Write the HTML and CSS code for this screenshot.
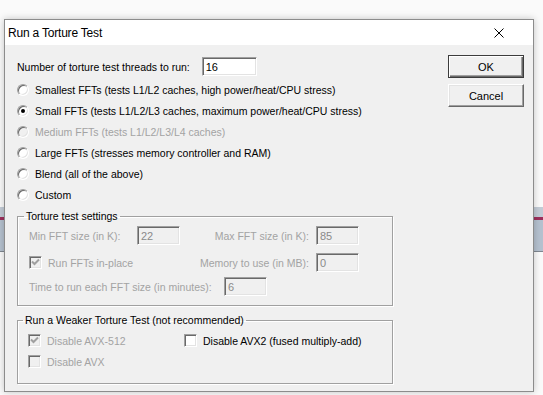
FILE: index.html
```html
<!DOCTYPE html>
<html>
<head>
    <meta charset="utf-8">
    <title>Run a Torture Test</title>
    <link rel="stylesheet" href="styles.css">
</head>
<body>
    <div class="window">
        <div class="titlebar">
            <span class="title">Run a Torture Test</span>
            <svg class="close" width="10" height="10" viewBox="0 0 10 10">
                <path d="M0.5 0.5 L9.5 9.5 M9.5 0.5 L0.5 9.5" stroke="#000" stroke-width="1" fill="none"/>
            </svg>
        </div>

        <div class="dialog">
            <div class="main">
                <div class="threads">
                    <span>Number of torture test threads to run:</span>
                    <div class="field">16</div>
                </div>

                <div class="options">
                    <div class="option"><span class="radio"></span>Smallest FFTs (tests L1/L2 caches, high power/heat/CPU stress)</div>
                    <div class="option"><span class="radio checked"></span>Small FFTs (tests L1/L2/L3 caches, maximum power/heat/CPU stress)</div>
                    <div class="option disabled"><span class="radio"></span>Medium FFTs (tests L1/L2/L3/L4 caches)</div>
                    <div class="option"><span class="radio"></span>Large FFTs (stresses memory controller and RAM)</div>
                    <div class="option"><span class="radio"></span>Blend (all of the above)</div>
                    <div class="option"><span class="radio"></span>Custom</div>
                </div>

                <fieldset class="group settings">
                    <legend>Torture test settings</legend>
                    <div class="row">
                        <span class="lbl first">Min FFT size (in K):</span>
                        <div class="field off">22</div>
                        <span class="lbl right">Max FFT size (in K):</span>
                        <div class="field off">85</div>
                    </div>
                    <div class="row second">
                        <span class="lbl first-wide"><span class="check off"><svg width="11" height="11" viewBox="0 0 11 11"><path d="M2 4.5 L4.5 7 L9 2.5" stroke="#a0a0a0" stroke-width="2" fill="none"/></svg></span>Run FFTs in-place</span>
                        <span class="lbl right">Memory to use (in MB):</span>
                        <div class="field off">0</div>
                    </div>
                    <div class="row third">
                        <span class="lbl long">Time to run each FFT size (in minutes):</span>
                        <div class="field off">6</div>
                    </div>
                </fieldset>

                <fieldset class="group weaker">
                    <legend>Run a Weaker Torture Test (not recommended)</legend>
                    <div class="checks">
                        <div class="option disabled"><span class="check off"><svg width="11" height="11" viewBox="0 0 11 11"><path d="M2 4.5 L4.5 7 L9 2.5" stroke="#a0a0a0" stroke-width="2" fill="none"/></svg></span>Disable AVX-512</div>
                        <div class="option"><span class="check"></span>Disable AVX2 (fused multiply-add)</div>
                        <div class="option disabled"><span class="check off"></span>Disable AVX</div>
                    </div>
                </fieldset>
            </div>

            <div class="buttons">
                <button class="default">OK</button>
                <button>Cancel</button>
            </div>
        </div>
    </div>
</body>
</html>
```

FILE: styles.css
```css
* {
    box-sizing: border-box;
    margin: 0;
    padding: 0;
}
body {
    font-family: "Liberation Sans", Arial, sans-serif;
    font-size: 10.5px;
    color: #000;
    background:
        linear-gradient(to bottom,
            transparent 207px,
            #c3ccd6 207px, #c3ccd6 217px,
            #9d2f5c 217px, #9d2f5c 220px,
            #b5c1cf 220px, #b5c1cf 251px,
            #7f8790 251px, #7f8790 252px,
            transparent 252px),
        #fafafa;
    min-height: 395px;
    padding: 19px 0 0 4px;
}
.window {
    width: 530px;
    height: 373px;
    border: 1px solid #8c8c8c;
    background: #f0f0f0;
    box-shadow: 0 0 7px rgba(0, 0, 0, 0.22);
    display: flex;
    flex-direction: column;
}
.titlebar {
    height: 25px;
    background: #fff;
    display: flex;
    align-items: center;
    justify-content: space-between;
    padding-left: 3px;
    flex-shrink: 0;
}
.title {
    font-size: 12px;
    letter-spacing: -0.2px;
}
.close {
    margin-right: 29px;
    margin-top: 1px;
}
.dialog {
    display: flex;
    padding: 0 9px 0 12px;
}
.main {
    width: 376px;
}
.threads {
    display: flex;
    align-items: center;
    height: 19px;
    margin-top: 12px;
}
.threads .field {
    margin-left: 12px;
    width: 55px;
    background: #fff;
    color: #000;
}
.field {
    width: 43px;
    height: 19px;
    border: 1px solid;
    border-color: #a0a0a0 #fff #fff #a0a0a0;
    box-shadow: inset 1px 1px 0 #696969, inset -1px -1px 0 #e3e3e3;
    padding: 3px 0 0 3px;
    line-height: 12px;
    font-size: 11px;
}
.field.off {
    background: #f0f0f0;
    color: #8a8a8a;
}
.options {
    margin-top: 3px;
}
.option {
    height: 21px;
    display: flex;
    align-items: center;
    white-space: nowrap;
}
.disabled {
    color: #a3a3a3;
}
.radio {
    width: 12px;
    height: 12px;
    border-radius: 50%;
    border: 1px solid;
    border-color: #a0a0a0 #fff #fff #a0a0a0;
    box-shadow: inset 1px 1px 0 #696969, inset -1px -1px 0 #e3e3e3;
    background: #fff;
    margin-right: 6px;
    display: flex;
    align-items: center;
    justify-content: center;
    flex-shrink: 0;
}
.disabled .radio {
    background: #f0f0f0;
}
.radio.checked::after {
    content: "";
    width: 4px;
    height: 4px;
    border-radius: 50%;
    background: #000;
}
.check {
    width: 13px;
    height: 13px;
    border: 1px solid;
    border-color: #a0a0a0 #fff #fff #a0a0a0;
    box-shadow: inset 1px 1px 0 #696969, inset -1px -1px 0 #e3e3e3;
    background: #fff;
    margin-right: 6px;
    display: inline-flex;
    align-items: center;
    justify-content: center;
    flex-shrink: 0;
}
.check.off {
    background: #f0f0f0;
}
.group {
    border: 1px solid #a0a0a0;
    box-shadow: 1px 1px 0 #fff, inset 1px 1px 0 #fff;
}
.group legend {
    line-height: 12px;
    padding: 0 2px;
    margin-left: -5px;
}
.settings {
    margin-top: 5px;
    padding: 4px 0 8px 11px;
    height: 96px;
}
.row {
    display: flex;
    align-items: center;
    height: 19px;
    color: #a3a3a3;
}
.row.second {
    margin-top: 8px;
}
.row.third {
    margin-top: 5px;
}
.lbl {
    white-space: nowrap;
    display: flex;
    align-items: center;
}
.lbl.first {
    width: 108px;
}
.lbl.first-wide {
    width: 151px;
}
.lbl.right {
    width: 136px;
    justify-content: flex-end;
    padding-right: 7px;
}
.lbl.long {
    width: 195px;
}
.weaker {
    margin-top: 8px;
    padding: 4px 0 5px 10px;
    height: 70px;
}
.checks {
    display: grid;
    grid-template-columns: 156px auto;
}
.buttons {
    margin-left: auto;
    display: flex;
    flex-direction: column;
    gap: 6px;
    margin-top: 10px;
}
button {
    width: 76px;
    height: 23px;
    font-family: inherit;
    font-size: 11px;
    background: #f0f0f0;
    color: #000;
    border: 1px solid;
    border-color: #fff #696969 #696969 #fff;
    box-shadow: inset -1px -1px 0 #a0a0a0, inset 1px 1px 0 #e3e3e3;
}
button.default {
    border: 1px solid #3c3c3c;
    box-shadow: inset 1px 1px 0 #fff, inset -1px -1px 0 #696969, inset -2px -2px 0 #a0a0a0;
}
```
